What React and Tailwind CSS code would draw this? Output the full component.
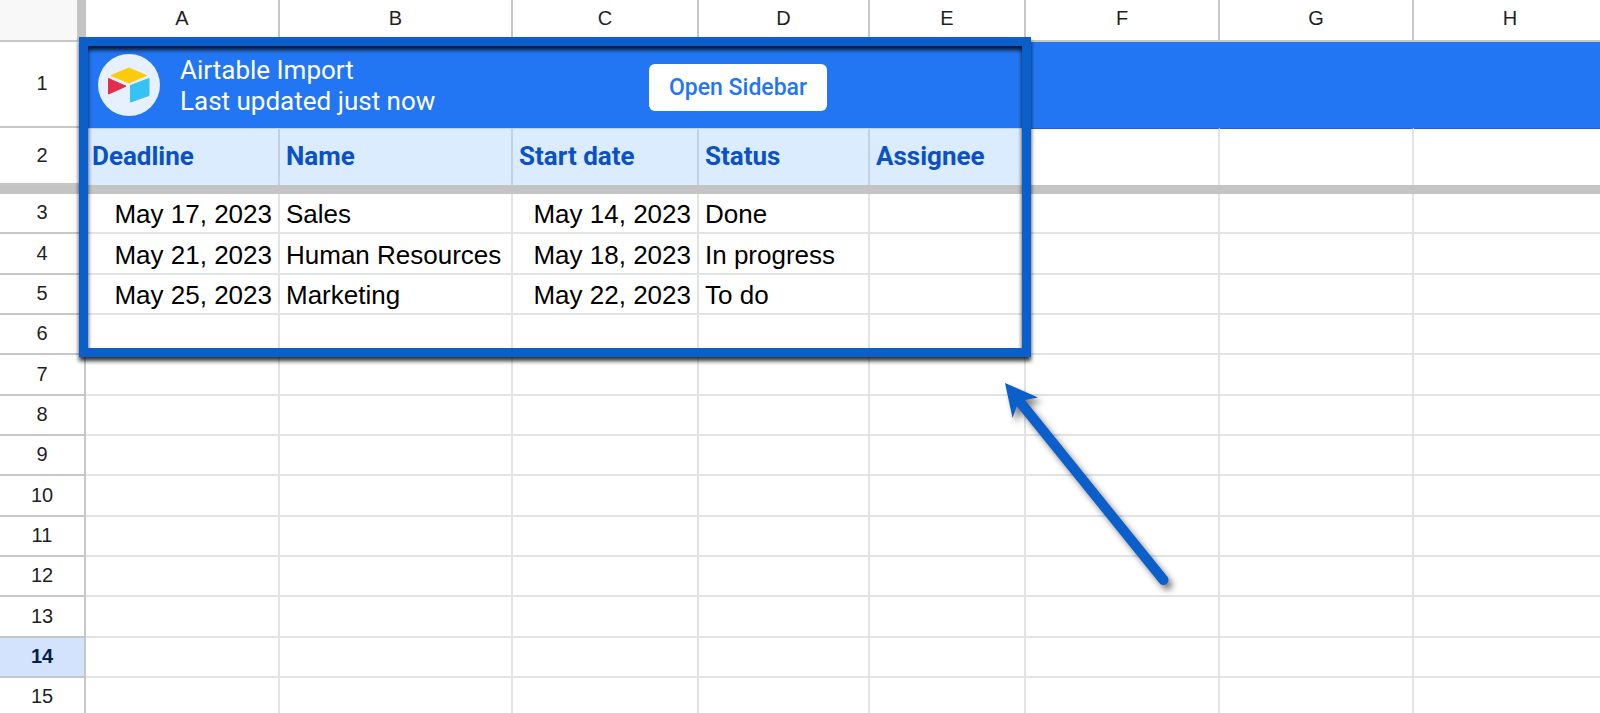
const columns = [
    { letter: "A", width: "w-[194px]" },
    { letter: "B", width: "w-[233px]" },
    { letter: "C", width: "w-[186px]" },
    { letter: "D", width: "w-[171px]" },
    { letter: "E", width: "w-[156px]" },
    { letter: "F", width: "w-[194px]" },
    { letter: "G", width: "w-[194px]" },
    { letter: "H", width: "" },
];

const fields = ["Deadline", "Name", "Start date", "Status", "Assignee", "", "", ""];

const tasks = [
    { deadline: "May 17, 2023", name: "Sales", start: "May 14, 2023", status: "Done" },
    { deadline: "May 21, 2023", name: "Human Resources", start: "May 18, 2023", status: "In progress" },
    { deadline: "May 25, 2023", name: "Marketing", start: "May 22, 2023", status: "To do" },
];

const rowNumbers = [3, 4, 5, 6, 7, 8, 9, 10, 11, 12, 13, 14, 15];
const activeRow = 14;

const AirtableLogo = () => (
    <svg viewBox="0 0 62 62" className="size-[62px] shrink-0" aria-hidden="true">
        <circle cx="31" cy="31" r="31" fill="#e6f0fe" />
        <g strokeWidth="1" strokeLinejoin="round">
            <path d="M13 21.5 L31 14 L48.5 21.5 L31 29 Z" fill="#fccb0b" stroke="#fccb0b" />
            <path d="M10.5 24.5 L28 32.2 L10.5 40 Z" fill="#e42c4b" stroke="#e42c4b" />
            <path d="M32.5 31.5 L51 24.5 V41.5 L32.5 48 Z" fill="#35c3f2" stroke="#35c3f2" />
        </g>
    </svg>
);

const Banner = () => (
    <div className="flex items-center pl-3 font-['Roboto',sans-serif]">
        <AirtableLogo />
        <div className="ml-5 w-[469px] pt-0.5 text-left text-[26px] leading-[31px] text-white">
            <div>Airtable Import</div>
            <div>Last updated just now</div>
        </div>
        <button
            type="button"
            className="mt-1 h-[47px] rounded-md bg-white px-5 pt-0.5 text-[23px] font-medium whitespace-nowrap text-[#2376f3]"
        >
            Open Sidebar
        </button>
    </div>
);

const RowNumber = ({ number }) => (
    <th
        scope="row"
        className={`border-r-2 border-b-2 border-[#c6c8c8] p-0 pb-0.5 text-[20px] leading-6 ${
            number === activeRow ? "bg-[#d3e3fd] font-bold text-[#041e49]" : "font-normal text-[#1f1f1f]"
        }`}
    >
        {number}
    </th>
);

const DataRow = ({ number, task }) => {
    const cells = task ? [task.deadline, task.name, task.start, task.status] : [];

    return (
        <tr className="h-10 [&:nth-child(3n+2)]:h-[41px]">
            <RowNumber number={number} />
            {columns.map((col, i) => (
                <td
                    key={col.letter}
                    className={`border-r-2 border-b-2 border-[#e2e3e3] px-1.5 pt-0.5 pb-0 text-[26px] leading-[30px] whitespace-nowrap text-black ${
                        i === 0 || i === 2 ? "text-right" : "text-left"
                    }`}
                >
                    {cells[i]}
                </td>
            ))}
        </tr>
    );
};

// Frame and arrow drawn over the imported range
const Callout = () => (
    <div className="pointer-events-none absolute inset-0">
        <div className="absolute top-[37px] left-[79px] h-[320px] w-[952px] border-[9px] border-[#0a5fca] drop-shadow-[0_4px_2px_rgba(0,0,0,0.8)]" />
        <svg
            viewBox="0 0 180 220"
            className="absolute top-[375px] left-[1000px] h-[220px] w-[180px] overflow-visible drop-shadow-[4px_5px_3px_rgba(0,0,0,0.5)]"
            aria-hidden="true"
        >
            <path d="M5 8 L38 22.5 L25 25 L17 31 L12.5 43 Z" fill="#0a5fca" />
            <path d="M20 27 L163.5 205" stroke="#0a5fca" strokeWidth="10" strokeLinecap="round" fill="none" />
        </svg>
    </div>
);

const App = () => {
    return (
        <main className="relative h-screen overflow-hidden bg-white font-['Liberation_Sans',Arial,sans-serif]">
            <table className="w-full min-w-[1608px] table-fixed border-separate border-spacing-0">
                <colgroup>
                    <col className="w-[86px]" />
                    {columns.map((col) => (
                        <col key={col.letter} className={col.width} />
                    ))}
                </colgroup>
                <thead>
                    <tr className="h-[42px]">
                        <td className="border-r-[9px] border-b-2 border-r-[#c4c4c4] border-b-[#c6c8c8] bg-[#f8f8f8] p-0" />
                        {columns.map((col) => (
                            <th
                                key={col.letter}
                                scope="col"
                                className="border-r-2 border-b-2 border-[#c6c8c8] p-0 pb-1 text-[20px] leading-6 font-normal text-[#1f1f1f]"
                            >
                                {col.letter}
                            </th>
                        ))}
                    </tr>
                    <tr className="h-[86px]">
                        <RowNumber number={1} />
                        <td colSpan={8} className="bg-[#2376f3] p-0">
                            <Banner />
                        </td>
                    </tr>
                    <tr className="h-[57px]">
                        <RowNumber number={2} />
                        {fields.map((field, i) => (
                            <th
                                key={columns[i].letter}
                                scope="col"
                                className={`border-t border-r-2 px-1.5 pt-0 pb-0.5 text-left font-['Roboto',sans-serif] text-[26px] leading-[30px] font-bold text-[#0b51c6] ${
                                    field
                                        ? "border-t-[#c3d2e3] border-r-[#c3d2e3] bg-[#daecfe]"
                                        : "border-t-[#1a62d6] border-r-[#e2e3e3]"
                                }`}
                            >
                                {field}
                            </th>
                        ))}
                    </tr>
                    {/* frozen rows divider */}
                    <tr className="h-[9px]" aria-hidden="true">
                        <td colSpan={9} className="bg-[#c4c4c4] p-0" />
                    </tr>
                </thead>
                <tbody>
                    {rowNumbers.map((number, i) => (
                        <DataRow key={number} number={number} task={tasks[i]} />
                    ))}
                </tbody>
            </table>
            <Callout />
        </main>
    );
};

export default App;
